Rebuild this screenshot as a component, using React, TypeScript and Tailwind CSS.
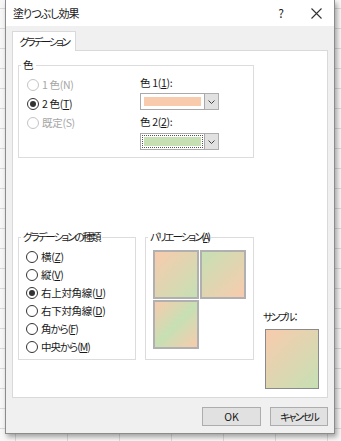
import React from 'react';

const FONT = "font-['Meiryo_UI','Noto_Sans_CJK_JP',sans-serif] [font-feature-settings:'palt']";

function Radio({ label, checked, disabled, tight }: { label: React.ReactNode; checked?: boolean; disabled?: boolean; tight?: boolean }) {
  return (
    <div className="flex items-center h-[18px] gap-[3px]">
      <span
        className={`w-[12px] h-[12px] rounded-full border bg-white flex items-center justify-center ${
          disabled ? 'border-[#c4c4c4]' : 'border-[#333333]'
        }`}
      >
        {checked && <span className="w-[6px] h-[6px] rounded-full bg-[#333333]" />}
      </span>
      <span className={`${disabled ? 'text-[#a6a6a6]' : 'text-[#1a1a1a]'} ${tight ? 'tracking-[-1px]' : 'tracking-[-0.3px]'}`}>
        {label}
      </span>
    </div>
  );
}

function ColorPicker({ color, focused }: { color: string; focused?: boolean }) {
  return (
    <div className="flex w-[79px] h-[17px]">
      <div className="flex-1 border border-[#a9a9a9] bg-white p-px">
        <div className={`w-full h-full p-px ${focused ? 'border border-dotted border-[#555]' : 'border border-white'}`}>
          <div className="w-full h-full" style={{ backgroundColor: color }} />
        </div>
      </div>
      <div className="w-[14px] border border-l-0 border-[#adadad] bg-[#e1e1e1] flex items-center justify-center">
        <svg width="7" height="4" viewBox="0 0 7 4">
          <path d="M0.5 0.5 L3.5 3.5 L6.5 0.5" fill="none" stroke="#444" strokeWidth="1" />
        </svg>
      </div>
    </div>
  );
}

function Tile({ gradient }: { gradient: string }) {
  return <div className={`w-[46px] h-[49px] border-2 border-[#b0b0b0] ${gradient}`} />;
}

export default function App() {
  return (
    <div
      className={`w-[341px] h-[441px] overflow-hidden bg-[#f7f7f7] bg-[linear-gradient(#dadada_1px,transparent_1px),linear-gradient(90deg,#dadada_1px,transparent_1px)] [background-size:52px_20px] [background-position:15px_8px] text-[10.5px] leading-[14px] ${FONT}`}
    >
      <div className="ml-[5px] w-[330px] h-[434px] flex flex-col border border-[#8c8c8c] border-t-0 bg-[#f0f0f0] shadow-[2px_3px_5px_rgba(0,0,0,0.35)]">
        {/* title bar */}
        <div className="h-[26px] bg-white flex items-center shrink-0">
          <span className="pl-[7px] text-[11px] tracking-[-1px] text-[#1a1a1a]">塗りつぶし効果</span>
          <div className="flex-1" />
          <div className="w-[34px] text-center text-[12px] text-[#222]">?</div>
          <div className="w-[36px] flex justify-center">
            <svg width="11" height="11" viewBox="0 0 11 11">
              <path d="M0.5 0.5 L10.5 10.5 M10.5 0.5 L0.5 10.5" stroke="#333" strokeWidth="1.1" />
            </svg>
          </div>
        </div>

        {/* body */}
        <div className="flex-1 px-[6px] pt-[5px]">
          <div className="relative z-10 -mb-px w-[64px] h-[20px] bg-white border border-b-0 border-[#d9d9d9] flex items-center justify-center text-[#1a1a1a] tracking-[-2.3px]">
            グラデーション
          </div>
          <div className="h-[348px] bg-white border border-[#d9d9d9] pl-[5px] pt-[7px]">
            {/* 色 */}
            <fieldset className="w-[236px] h-[100px] border border-[#dcdcdc]">
              <legend className="ml-[2px] px-[2px] text-[#1a1a1a]">色</legend>
              <div className="flex">
                <div className="w-[121px] pl-[8px] pt-[4px] flex flex-col gap-px">
                  <Radio label="1 色(N)" disabled />
                  <Radio
                    label={
                      <>
                        2 色(<u>T</u>)
                      </>
                    }
                    checked
                  />
                  <Radio label="既定(S)" disabled />
                </div>
                <div className="pt-[4px] flex flex-col text-[#1a1a1a] tracking-[-0.3px]">
                  <span>
                    色 1(<u>1</u>):
                  </span>
                  <div className="mt-[3px]">
                    <ColorPicker color="#f8cbad" />
                  </div>
                  <span className="mt-[5px]">
                    色 2(<u>2</u>):
                  </span>
                  <div className="mt-[4px]">
                    <ColorPicker color="#c6e0b4" focused />
                  </div>
                </div>
              </div>
            </fieldset>

            {/* lower row */}
            <div className="mt-[72px] flex gap-[9px] items-start">
              <fieldset className="w-[118px] h-[130px] border border-[#dcdcdc]">
                <legend className="ml-[2px] px-[2px] text-[#1a1a1a] tracking-[-2px]">グラデーションの種類</legend>
                <div className="pl-[7px] pt-[4px] flex flex-col">
                  <Radio label={<>横(<u>Z</u>)</>} />
                  <Radio label={<>縦(<u>V</u>)</>} />
                  <Radio label={<>右上対角線(<u>U</u>)</>} checked />
                  <Radio label={<>右下対角線(<u>D</u>)</>} />
                  <Radio label={<>角から(<u>F</u>)</>} tight />
                  <Radio label={<>中央から(<u>M</u>)</>} tight />
                </div>
              </fieldset>

              <fieldset className="w-[109px] h-[130px] border border-[#dcdcdc]">
                <legend className="ml-[2px] px-[2px] text-[#1a1a1a] tracking-[-2px]">
                  バリエーション(<u>A</u>)
                </legend>
                <div className="pl-[7px] pt-[6px] grid grid-cols-[46px_46px] gap-px">
                  <Tile gradient="bg-[linear-gradient(135deg,#f8cbad,#c6e0b4)]" />
                  <Tile gradient="bg-[linear-gradient(135deg,#c6e0b4,#f8cbad)]" />
                  <Tile gradient="bg-[linear-gradient(135deg,#f8cbad,#c6e0b4_50%,#f8cbad)]" />
                </div>
              </fieldset>

              <div className="mt-[80px] flex flex-col">
                <span className="text-[#1a1a1a] tracking-[-2px]">サンプル：</span>
                <div className="mt-[5px] ml-[2px] w-[54px] h-[60px] border border-[#8a8a8a] bg-[linear-gradient(135deg,#f8cbad,#c6e0b4)]" />
              </div>
            </div>
          </div>

          {/* buttons */}
          <div className="mt-[9px] flex justify-end gap-[9px]">
            <button className="w-[59px] h-[19px] bg-[#e1e1e1] border border-[#adadad] text-[#1a1a1a]">OK</button>
            <button className="w-[58px] h-[19px] bg-[#e1e1e1] border border-[#adadad] text-[#1a1a1a] tracking-[-2px]">
              キャンセル
            </button>
          </div>
        </div>
      </div>
    </div>
  );
}
